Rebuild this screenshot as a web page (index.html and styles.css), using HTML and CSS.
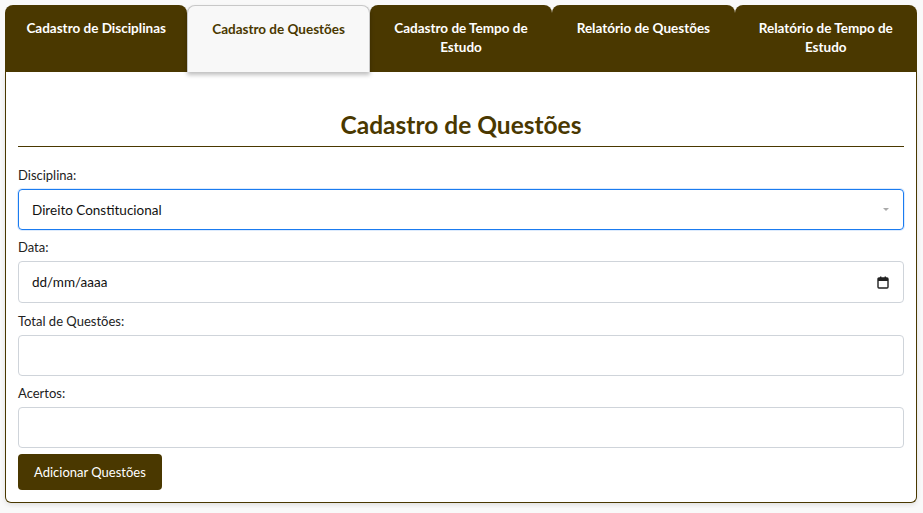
FILE: index.html
```html
<!DOCTYPE html>
<html lang="pt-BR">
<head>
    <meta charset="UTF-8"/>
    <title>Cadastro de Questões</title>
    <link rel="stylesheet" href="styles.css">
</head>
<body>
<div class="wrapper">
    <div class="tabs">
        <div class="tab">Cadastro de Disciplinas</div>
        <div class="tab active">Cadastro de Questões</div>
        <div class="tab">Cadastro de Tempo de Estudo</div>
        <div class="tab">Relatório de Questões</div>
        <div class="tab">Relatório de Tempo de Estudo</div>
    </div>

    <div class="panel">
        <h2 class="title">Cadastro de Questões</h2>

        <div class="group">
            <label>Disciplina:</label>
            <div class="field select">
                <span>Direito Constitucional</span>
                <span class="caret"></span>
            </div>
        </div>
        <div class="group date-group">
            <label>Data:</label>
            <div class="field date">
                <span>dd/mm/aaaa</span>
                <svg width="12" height="13" viewBox="0 0 12 13">
                    <rect x="1" y="2" width="10" height="10" rx="1" fill="none" stroke="#222" stroke-width="1.4"/>
                    <rect x="1" y="2" width="10" height="3" fill="#222"/>
                    <rect x="3" y="0.5" width="1.4" height="2.5" fill="#222"/>
                    <rect x="7.6" y="0.5" width="1.4" height="2.5" fill="#222"/>
                </svg>
            </div>
        </div>
        <div class="group">
            <label>Total de Questões:</label>
            <div class="field"></div>
        </div>
        <div class="group last">
            <label>Acertos:</label>
            <div class="field"></div>
        </div>
        <button class="btn">Adicionar Questões</button>
    </div>
</div>
</body>
</html>
```

FILE: styles.css
```css
body {
    margin: 0;
    padding: 5px;
    background: #f9f9f9;
    font-family: "Lato", "Open Sans", sans-serif;
    color: #222;
}

.wrapper {
    width: 912px;
}

.tabs {
    display: flex;
}

.tab {
    flex: none;
    width: 20%;
    height: 67px;
    box-sizing: border-box;
    padding: 14px 12px 0;
    background: #4a3800;
    color: #fff;
    font-weight: bold;
    font-size: 13.5px;
    line-height: 19px;
    text-align: center;
    border-radius: 8px 8px 0 0;
}

.tab.active {
    background: #f8f8f8;
    color: #4a3800;
    border: 1px solid #c8c8c8;
    border-bottom: none;
    box-shadow: 0 3px 4px rgba(0, 0, 0, 0.25);
    position: relative;
    z-index: 1;
}

.panel {
    background: #fff;
    border: 1px solid #4a3800;
    border-top: none;
    border-radius: 0 0 6px 6px;
    padding: 12px 12px 12px;
    box-shadow: 0 2px 5px rgba(0, 0, 0, 0.1);
}

.title {
    margin: 26px 0 18px;
    padding-bottom: 6px;
    border-bottom: 1px solid #4a3800;
    color: #4a3800;
    font-size: 24.5px;
    line-height: 30px;
    text-align: center;
}

.group {
    margin-bottom: 7px;
}

.group.date-group {
    margin-bottom: 8px;
}

.group.last {
    margin-bottom: 6px;
}

.group label {
    display: block;
    font-size: 13px;
    line-height: 20px;
    margin-bottom: 4px;
    color: #222;
}

.field {
    height: 41px;
    box-sizing: border-box;
    border: 1px solid #cfd4da;
    border-radius: 4px;
    display: flex;
    align-items: center;
    justify-content: space-between;
    padding: 0 14px 0 13px;
    font-size: 13.5px;
    color: #111;
}

.field.select {
    border-color: #1a7bf0;
    box-shadow: 0 0 0 1px rgba(26, 123, 240, 0.15);
}

.field.date {
    height: 42px;
}

.caret {
    width: 0;
    height: 0;
    border-left: 3px solid transparent;
    border-right: 3px solid transparent;
    border-top: 3px solid #aaa;
}

.btn {
    display: block;
    height: 36px;
    padding: 0 16px;
    background: #4a3800;
    color: #fff;
    border: none;
    border-radius: 4px;
    font-family: inherit;
    font-size: 13px;
}
```
